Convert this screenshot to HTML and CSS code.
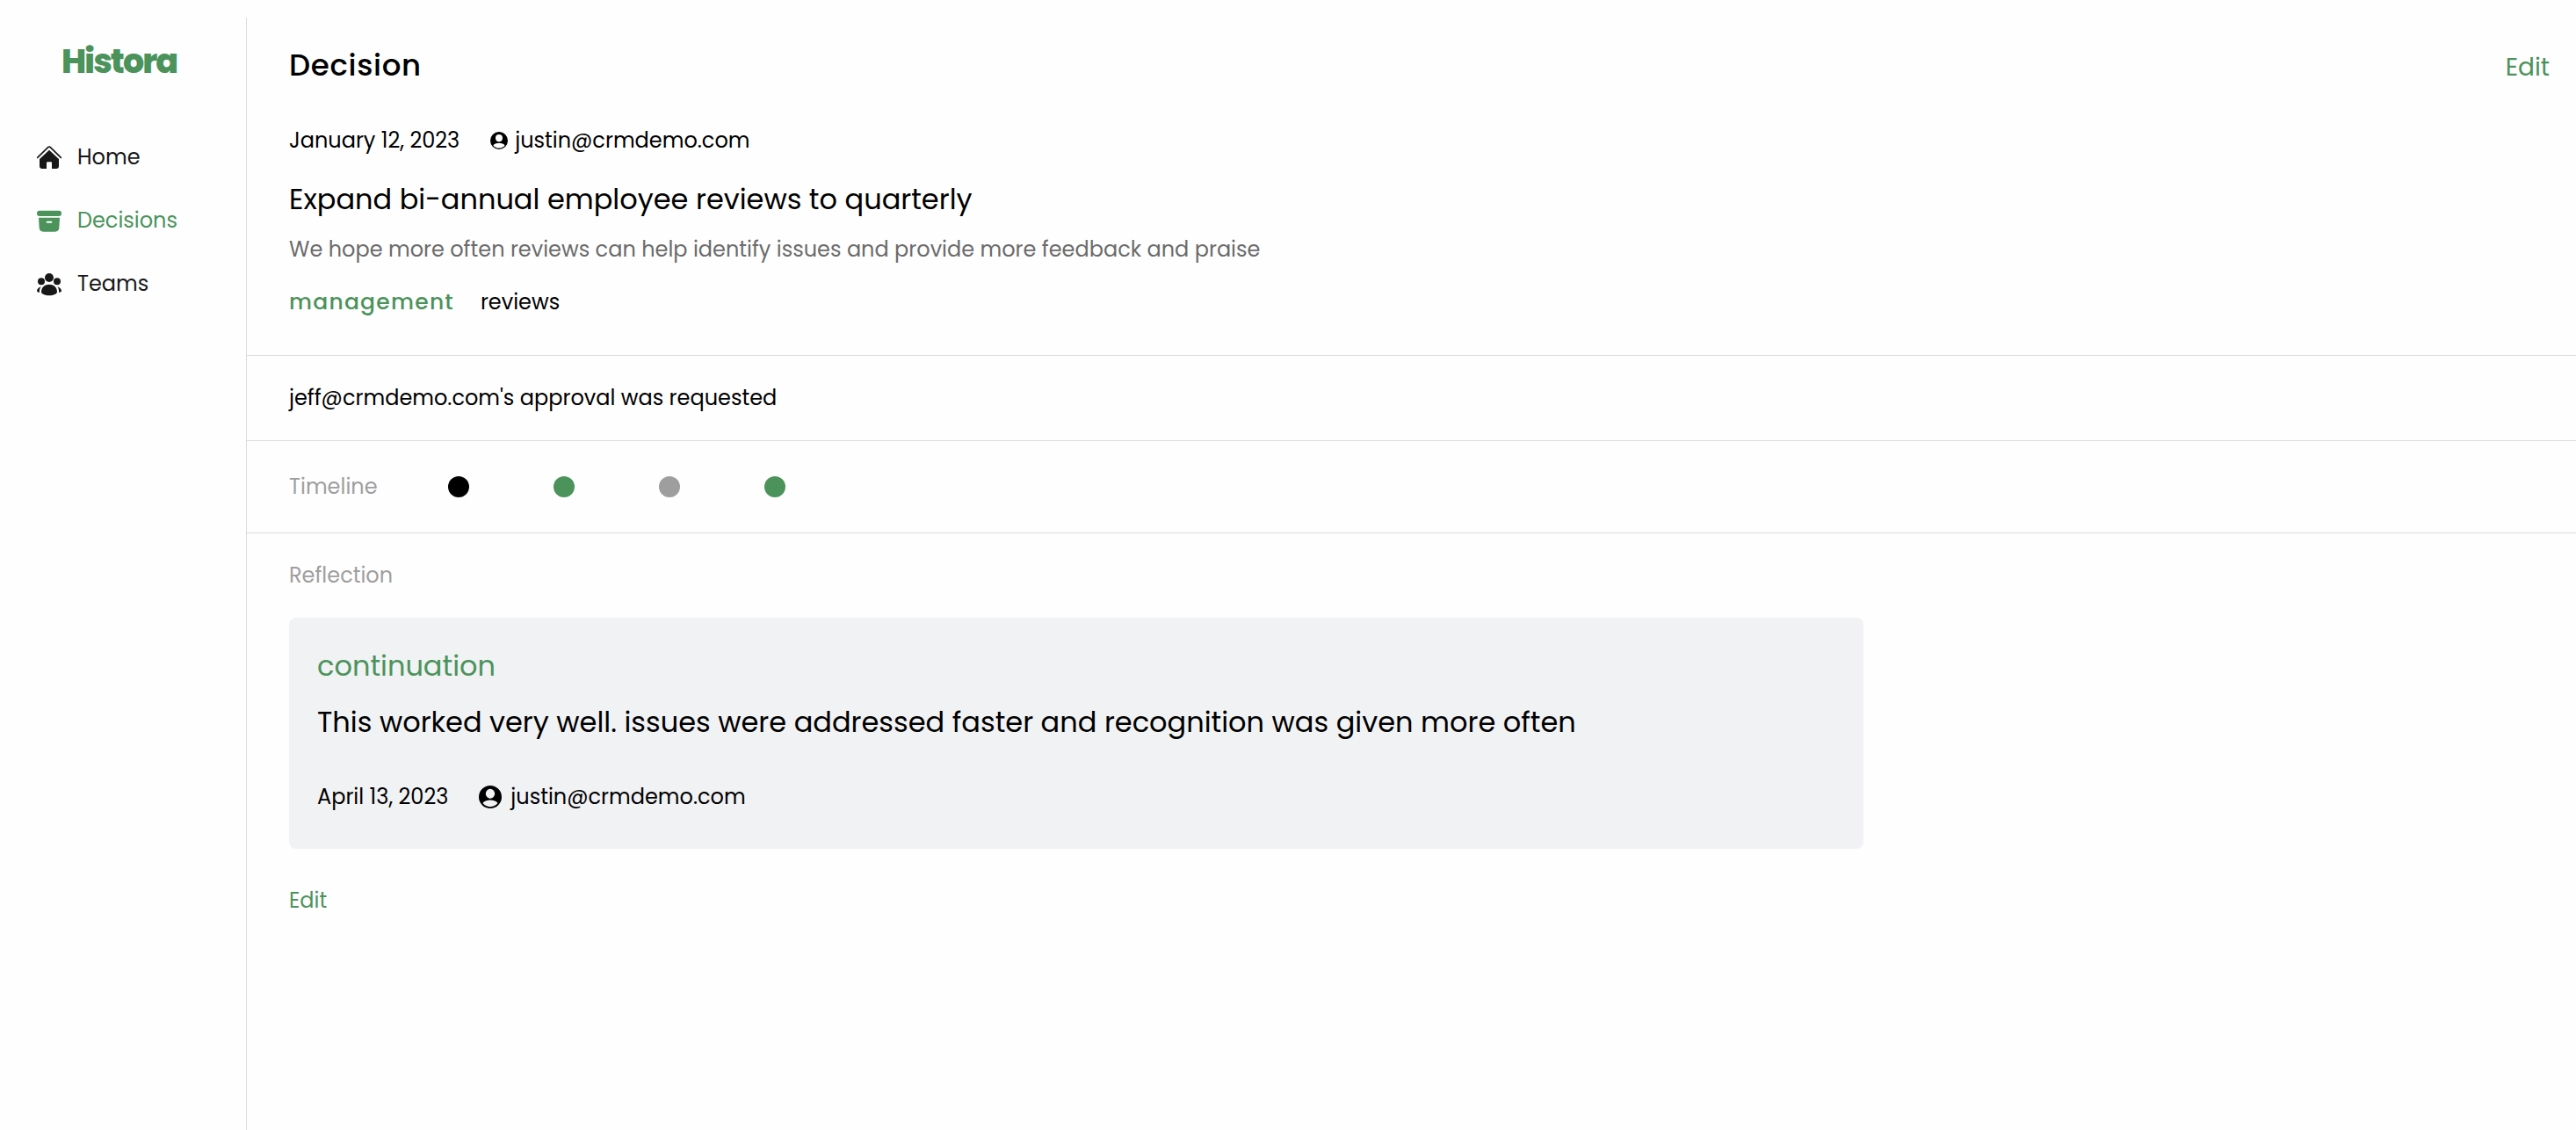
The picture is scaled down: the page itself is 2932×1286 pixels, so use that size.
FILE: index.html
```html
<!DOCTYPE html>
<html lang="en">
<head>
<meta charset="utf-8">
<meta name="viewport" content="width=device-width, initial-scale=1">
<title>Histora</title>
<link rel="stylesheet" href="styles.css">
</head>
<body>
<svg class="sprite" aria-hidden="true">
  <symbol id="user" viewBox="0 0 24 24">
    <path fill-rule="evenodd" d="M12 0a12 12 0 1 0 0 24a12 12 0 0 0 0-24zM12 3.500a4.800 5 0 0 1 0 10a4.800 5 0 0 1 0-10zM12 22.300a10.200 10.200 0 0 1-7.900-3.800c1.200-2 4.400-3.300 7.900-3.300s6.700 1.300 7.900 3.300a10.200 10.200 0 0 1-7.900 3.800z"/>
  </symbol>
</svg>
<div class="app">
  <aside class="sidebar">
    <a class="brand" href="#">Histora</a>
    <nav class="nav">
      <a class="nav-link" href="#">
        <svg class="nav-icon" viewBox="0 -3 84 84" aria-hidden="true">
          <path fill="none" stroke="currentColor" stroke-width="5" stroke-linecap="round" d="M2 40L38 5Q42 1 46 5L82 40"/>
          <path d="M42 14L75 45V69Q75 78 66 78H51V58Q51 55 48 55H36Q33 55 33 58V78H18Q9 78 9 69V45z"/>
        </svg>
        Home
      </a>
      <a class="nav-link active" href="#" aria-current="page">
        <svg class="nav-icon" viewBox="0 -3 84 84" aria-hidden="true">
          <rect x="0" y="5" width="84" height="19" rx="9"/>
          <path fill-rule="evenodd" d="M6 29H78L76 64Q75 77 62 77H22Q9 77 8 64zM35 41Q32 41 32 44T35 47H49Q52 47 52 44T49 41z"/>
        </svg>
        Decisions
      </a>
      <a class="nav-link" href="#">
        <svg class="nav-icon" viewBox="0 -3 84 84" aria-hidden="true">
          <circle cx="42" cy="18" r="15"/>
          <circle cx="15" cy="31" r="12"/>
          <circle cx="69" cy="31" r="12"/>
          <path d="M42 41C57 41 69 51 69 67C69 74 57 79 42 79S15 74 15 67C15 51 27 41 42 41z"/>
          <path d="M14 49C10 54 8 61 9 69C4 68 0 66 0 64C0 57 6 51 14 49zM70 49C74 54 76 61 75 69C80 68 84 66 84 64C84 57 78 51 70 49z"/>
        </svg>
        Teams
      </a>
    </nav>
  </aside>
  <main class="main">
    <section class="section decision">
      <header class="page-head">
        <h1 class="page-title">Decision</h1>
        <a class="edit-link large" href="#">Edit</a>
      </header>
      <div class="meta">
        <time datetime="2023-01-12">January 12, 2023</time>
        <span class="author"><svg class="user-icon" aria-hidden="true"><use href="#user"/></svg>justin@crmdemo.com</span>
      </div>
      <h2 class="headline">Expand bi-annual employee reviews to quarterly</h2>
      <p class="summary">We hope more often reviews can help identify issues and provide more feedback and praise</p>
      <div class="tags">
        <a class="tag category" href="#">management</a>
        <a class="tag" href="#">reviews</a>
      </div>
    </section>
    <section class="section approval">
      <p>jeff@crmdemo.com's approval was requested</p>
    </section>
    <section class="section timeline">
      <h3 class="label">Timeline</h3>
      <ol class="dots">
        <li class="dot"></li>
        <li class="dot green"></li>
        <li class="dot gray"></li>
        <li class="dot green"></li>
      </ol>
    </section>
    <section class="section reflection">
      <h3 class="label">Reflection</h3>
      <article class="card">
        <p class="outcome">continuation</p>
        <p class="headline">This worked very well. issues were addressed faster and recognition was given more often</p>
        <div class="meta">
          <time datetime="2023-04-13">April 13, 2023</time>
          <span class="author"><svg class="user-icon large" aria-hidden="true"><use href="#user"/></svg>justin@crmdemo.com</span>
        </div>
      </article>
      <a class="edit-link" href="#">Edit</a>
    </section>
  </main>
</div>
</body>
</html>
```
FILE: styles.css
```css
:root {
  --green: #4b935b;
  --line: #dcdcdc;
}

* {
  box-sizing: border-box;
  margin: 0;
  padding: 0;
}

body {
  background: #fefefe;
  color: #000;
  font: 24px/36px Poppins, Inter, sans-serif;
}

a {
  color: inherit;
  text-decoration: none;
}

svg {
  fill: currentColor;
  flex: none;
}

.sprite {
  display: none;
}

.app {
  display: flex;
  min-height: 100vh;
  padding-top: 20px;
}

.sidebar {
  flex: none;
  width: 281px;
  border-right: 1px solid var(--line);
  padding: 26px 42px;
  color: #181818;
}

.brand {
  display: block;
  padding-left: 28px;
  color: var(--green);
  font-size: 38px;
  font-weight: 800;
  letter-spacing: -0.05em;
  line-height: 48px;
}

.nav {
  display: flex;
  flex-direction: column;
  gap: 36px;
  margin-top: 67px;
}

.nav-link {
  display: flex;
  align-items: center;
  gap: 18px;
}

.nav-link.active {
  color: var(--green);
}

.nav-icon {
  width: 28px;
  height: 28px;
  overflow: visible;
}

.main {
  flex: 1;
  min-width: 0;
}

.section {
  padding: 30px 30px 30px 48px;
}

.section + .section {
  border-top: 1px solid var(--line);
}

.decision {
  padding-bottom: 42px;
}

.page-head {
  display: flex;
  justify-content: space-between;
  align-items: baseline;
  margin-bottom: 44px;
}

.page-title {
  font-size: 34px;
  font-weight: 500;
  letter-spacing: 0.02em;
  line-height: 48px;
}

.edit-link {
  color: var(--green);
}

.edit-link.large {
  font-size: 28px;
}

.meta {
  display: flex;
  gap: 35px;
}

.author {
  display: flex;
  align-items: center;
  gap: 8px;
}

.user-icon {
  width: 20px;
  height: 20px;
}

.user-icon.large {
  width: 26px;
  height: 26px;
}

.headline,
.outcome {
  font-size: 32px;
  font-weight: 400;
  line-height: 48px;
}

.decision .headline {
  margin: 25px 0 15px;
}

.summary {
  color: #6b6b6b;
}

.tags {
  display: flex;
  gap: 30px;
  margin-top: 24px;
}

.category {
  color: var(--green);
  font-size: 25px;
  font-weight: 500;
  letter-spacing: 0.05em;
}

.timeline {
  display: flex;
  align-items: center;
  gap: 80px;
  padding-block: 34px;
}

.label {
  color: #9e9e9e;
  font-size: 24px;
  font-weight: 400;
}

.dots {
  display: flex;
  gap: 96px;
  list-style: none;
}

.dot {
  width: 24px;
  height: 24px;
  border-radius: 50%;
  background: #000;
}

.dot.green {
  background: var(--green);
}

.dot.gray {
  background: #9e9e9e;
}

.card {
  max-width: 1792px;
  margin: 30px 0 41px;
  padding: 31px 32px 41px;
  border-radius: 8px;
  background: #f1f2f4;
}

.outcome {
  margin-bottom: 16px;
  color: var(--green);
}

.card .meta {
  margin-top: 43px;
}

.card .author {
  gap: 10px;
}
```
